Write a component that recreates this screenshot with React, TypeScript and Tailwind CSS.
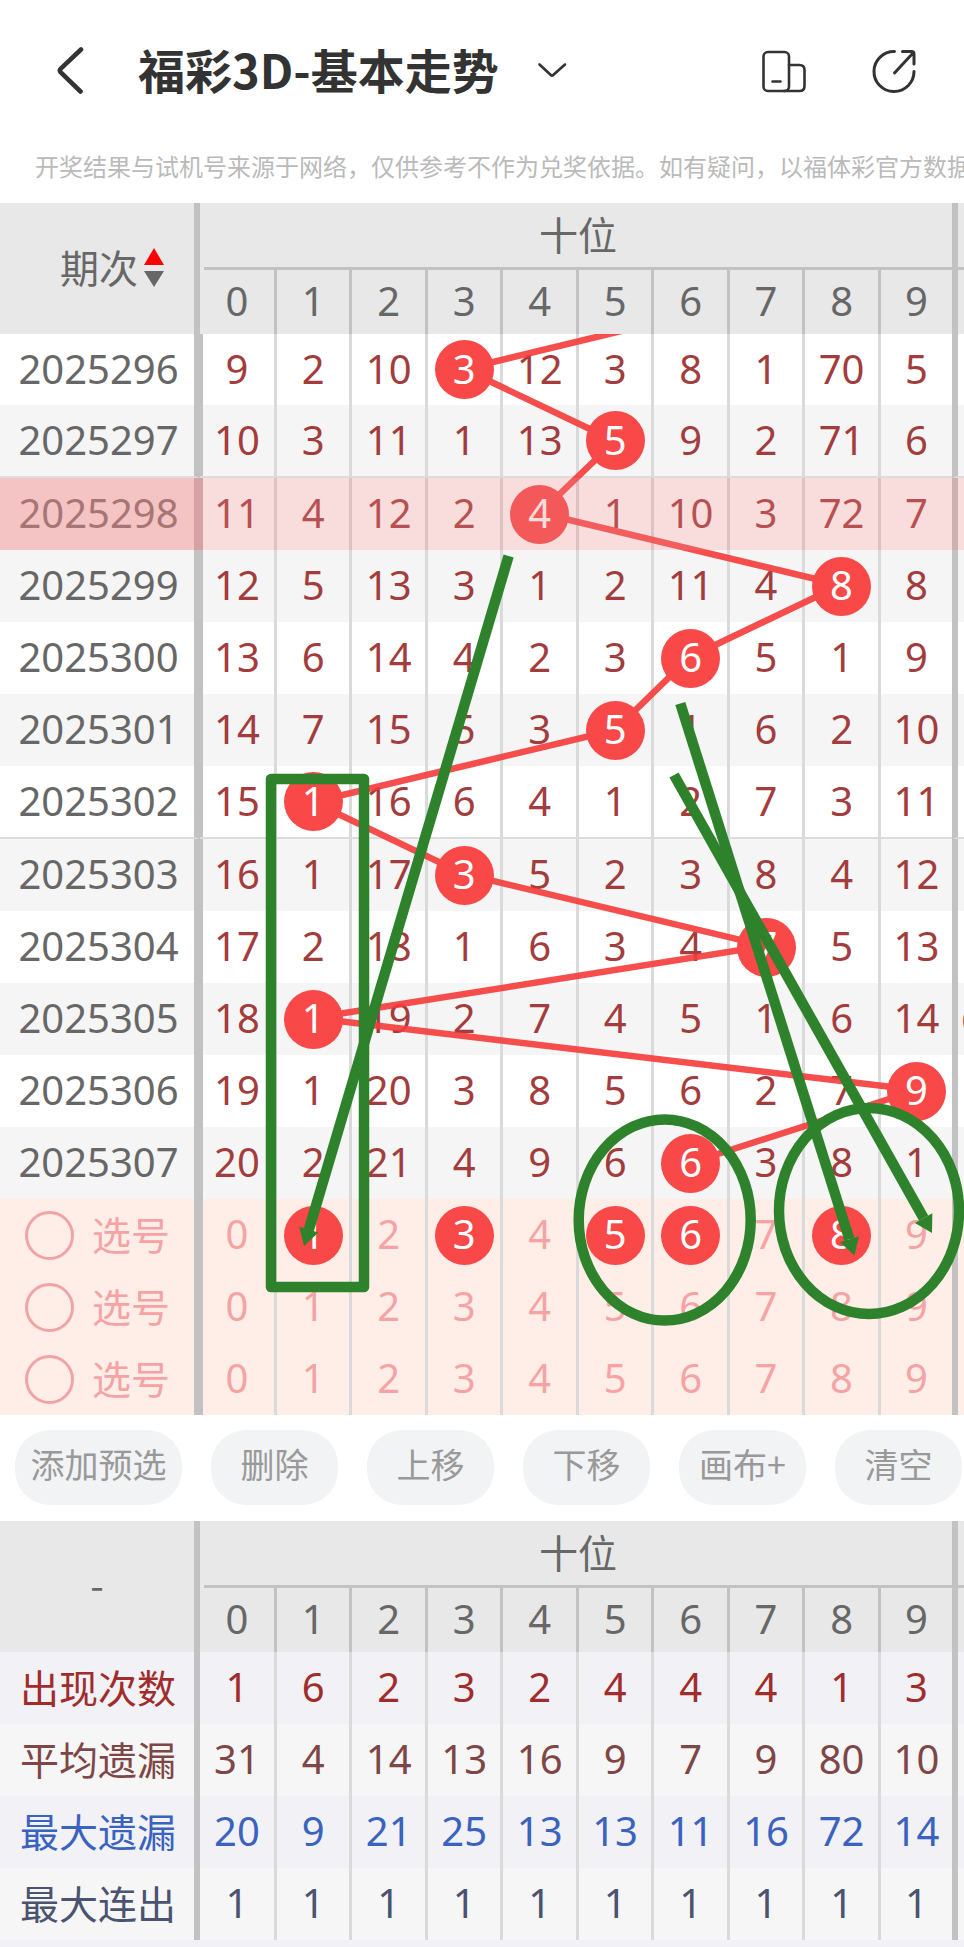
import { useState } from "react";
import type { ReactNode } from "react";

type DrawRow = { issue: string; values: number[]; hit: number; next?: string };

const DIGITS = [0, 1, 2, 3, 4, 5, 6, 7, 8, 9];

const DRAWS: DrawRow[] = [
  { issue: "2025296", values: [9, 2, 10, 3, 12, 3, 8, 1, 70, 5], hit: 3 },
  { issue: "2025297", values: [10, 3, 11, 1, 13, 5, 9, 2, 71, 6], hit: 5 },
  { issue: "2025298", values: [11, 4, 12, 2, 4, 1, 10, 3, 72, 7], hit: 4 },
  { issue: "2025299", values: [12, 5, 13, 3, 1, 2, 11, 4, 8, 8], hit: 8 },
  { issue: "2025300", values: [13, 6, 14, 4, 2, 3, 6, 5, 1, 9], hit: 6 },
  { issue: "2025301", values: [14, 7, 15, 5, 3, 5, 1, 6, 2, 10], hit: 5 },
  { issue: "2025302", values: [15, 1, 16, 6, 4, 1, 2, 7, 3, 11], hit: 1 },
  { issue: "2025303", values: [16, 1, 17, 3, 5, 2, 3, 8, 4, 12], hit: 3 },
  { issue: "2025304", values: [17, 2, 18, 1, 6, 3, 4, 7, 5, 13], hit: 7 },
  { issue: "2025305", values: [18, 1, 19, 2, 7, 4, 5, 1, 6, 14], hit: 1, next: "6" },
  { issue: "2025306", values: [19, 1, 20, 3, 8, 5, 6, 2, 7, 9], hit: 9 },
  { issue: "2025307", values: [20, 2, 21, 4, 9, 6, 6, 3, 8, 1], hit: 6 },
];

const STATS = [
  { label: "出现次数", values: [1, 6, 2, 3, 2, 4, 4, 4, 1, 3], tone: "bg-[#f1f1f6] text-[#a02c2c]" },
  { label: "平均遗漏", values: [31, 4, 14, 13, 16, 9, 7, 9, 80, 10], tone: "bg-[#f6f6f6] text-[#7e4646]" },
  { label: "最大遗漏", values: [20, 9, 21, 25, 13, 13, 11, 16, 72, 14], tone: "bg-[#f1f1f6] text-[#3a62bf]" },
  { label: "最大连出", values: [1, 1, 1, 1, 1, 1, 1, 1, 1, 1], tone: "bg-[#f6f6f6] text-[#4a5370]" },
];

const ACTIONS = ["删除", "上移", "下移", "画布+", "清空"];

const NUM = "font-['Noto_Sans','Noto_Sans_CJK_SC',sans-serif] text-[40px] leading-none";
const BALL = "relative z-20 mx-auto flex size-[59px] items-center justify-center rounded-full bg-[#f94848] pb-[2px] text-white";

function Columns() {
  return (
    <colgroup>
      <col className="w-[200px]" />
      <col className="w-[74px]" />
      {DIGITS.slice(1, 9).map((d) => (
        <col key={d} />
      ))}
      <col className="w-[74px]" />
      <col className="w-[12px]" />
    </colgroup>
  );
}

function TableHead({ corner }: { corner: ReactNode }) {
  return (
    <thead className="bg-[#e8e8e8] text-[#676767]">
      <tr>
        <th rowSpan={2} className="border-r-6 border-[#c2c2c2] p-0 pb-1 font-normal">
          {corner}
        </th>
        <th colSpan={10} className="p-0 pl-1 font-normal">
          <div className="flex h-[67px] items-center justify-center border-b-3 border-[#c2c2c2] pb-1 text-[39px] leading-none">
            十位
          </div>
        </th>
        <th className="border-l-6 border-[#c2c2c2] p-0">
          <div className="h-[67px] border-b-3 border-[#c2c2c2]" />
        </th>
      </tr>
      <tr>
        {DIGITS.map((d) => (
          <th key={d} className={`h-16 border-[#c2c2c2] p-0 pb-[2px] text-center font-normal ${NUM} ${d > 0 ? "border-l-3" : ""}`}>
            {d}
          </th>
        ))}
        <th className="border-l-6 border-[#c2c2c2] p-0" />
      </tr>
    </thead>
  );
}

function TrendRow({ row, index }: { row: DrawRow; index: number }) {
  const height = index === 0 ? "h-[71px]" : index === 1 || index === 6 ? "h-[73px]" : "h-[72px]";
  const rule = index === 1 || index === 6 ? "border-b-2 border-b-[#dcdcdc]" : "";
  return (
    <tr className={`relative text-[#a33c3c] ${index % 2 ? "bg-[#f5f5f5]" : "bg-white"}`}>
      <th className={`${height} ${rule} ${NUM} border-r-6 border-r-[#c2c2c2] p-0 pb-[2px] pl-[3px] text-center font-normal text-[#676767]`}>
        {row.issue}
        {row.issue === "2025298" && (
          <>
            <span className="absolute inset-0 z-30 bg-[#ea8585]/[.285]" />
            <span className="absolute inset-y-0 left-0 z-30 w-[203px] bg-[#ea8585]/[.285]" />
          </>
        )}
      </th>
      {row.values.map((v, d) => (
        <td
          key={d}
          className={`${rule} ${NUM} border-l-[#dadada] p-0 text-center ${d === row.hit ? "" : "pb-[2px]"} ${
            d > 0 ? "border-l-3" : "shadow-[inset_3px_0_0_#c2c2c2]"
          }`}
        >
          {d === row.hit ? <span className={BALL}>{v}</span> : v}
        </td>
      ))}
      <td className={`${rule} ${NUM} border-l-6 border-l-[#c2c2c2] p-0`}>
        <div className="overflow-hidden pl-[3px]">{row.next}</div>
      </td>
    </tr>
  );
}

function PickRow({ index }: { index: number }) {
  const [picked, setPicked] = useState<number[]>(index === 0 ? [1, 3, 5, 6, 8] : []);
  const toggle = (d: number) => setPicked((p) => (p.includes(d) ? p.filter((x) => x !== d) : [...p, d]));
  return (
    <tr className="bg-[#ffeee8] text-[#f5a3a5]">
      <th className="h-[72px] border-r-6 border-[#c2c2c2] p-0 pl-[25px] font-normal">
        <label className="flex items-center gap-[18px] text-[39px] leading-none">
          <input type="radio" name="pick" className="size-[49px] shrink-0 appearance-none rounded-full border-3 border-[#f2a3a5]" />
          <span className="pb-1">选号</span>
        </label>
      </th>
      {DIGITS.map((d) => (
        <td key={d} className={`border-[#dadada] p-0 text-center ${d > 0 ? "border-l-3" : "shadow-[inset_3px_0_0_#c2c2c2]"}`}>
          <button
            type="button"
            onClick={() => toggle(d)}
            className={`${NUM} ${picked.includes(d) ? BALL : "mx-auto flex size-[59px] items-center justify-center pb-[2px]"}`}
          >
            {d}
          </button>
        </td>
      ))}
      <td className="border-l-6 border-[#c2c2c2] p-0" />
    </tr>
  );
}

function TrendLines() {
  return (
    <svg
      viewBox="0 203 964 1212"
      preserveAspectRatio="none"
      className="pointer-events-none absolute inset-0 z-10 size-full"
      aria-hidden="true"
    >
      <clipPath id="body-area">
        <rect x="0" y="334" width="964" height="1081" />
      </clipPath>
      <polyline
        clipPath="url(#body-area)"
        points="766,296 464,369 615,441 540,513 841,585 690,657 615,730 313,802 464,874 766,946 313,1018 917,1090 690,1163"
        fill="none"
        stroke="#f53a3a"
        strokeOpacity="0.9"
        strokeWidth="6.5"
      />
    </svg>
  );
}

function Arrow({ from, to }: { from: [number, number]; to: [number, number] }) {
  const dx = to[0] - from[0];
  const dy = to[1] - from[1];
  const len = Math.hypot(dx, dy);
  const ux = dx / len;
  const uy = dy / len;
  const bx = to[0] - ux * 17;
  const by = to[1] - uy * 17;
  const head = `${to[0]},${to[1]} ${bx - uy * 10},${by + ux * 10} ${bx + uy * 10},${by - ux * 10}`;
  return (
    <g>
      <line x1={from[0]} y1={from[1]} x2={bx} y2={by} stroke="#2f822c" strokeWidth="10.5" />
      <polygon points={head} fill="#2f822c" />
    </g>
  );
}

function Annotations() {
  return (
    <svg
      viewBox="0 203 964 1212"
      preserveAspectRatio="none"
      className="pointer-events-none absolute inset-0 z-40 size-full"
      aria-hidden="true"
    >
      <g fill="none" stroke="#2f822c" strokeWidth="10.5" strokeLinejoin="round">
        <rect x="271" y="779" width="93" height="508" />
        <ellipse cx="664.7" cy="1220" rx="86" ry="100.5" />
        <ellipse cx="869" cy="1211" rx="90" ry="103" />
      </g>
      <Arrow from={[508.6, 556]} to={[304, 1246]} />
      <Arrow from={[680.3, 703.5]} to={[854.5, 1255.5]} />
      <Arrow from={[674, 775]} to={[932, 1233]} />
    </svg>
  );
}

export default function App() {
  return (
    <div className="min-h-screen overflow-x-hidden bg-[#f1f1f6] font-['Noto_Sans_CJK_SC',sans-serif]">
      <header className="flex h-[140px] items-center bg-white pr-[47px] pl-14 text-[#333]">
        <button type="button" aria-label="返回" className="shrink-0">
          <svg width="30" height="50" viewBox="56 44 30 50" fill="none" stroke="currentColor" strokeWidth="4.6" strokeLinecap="round" strokeLinejoin="round">
            <path d="M81 48.5L60.8 67.6Q59 69.5 60.8 71.4L80.5 90.5" />
          </svg>
        </button>
        <h1 className="ml-[52px] pb-1 text-[47px] leading-none font-bold whitespace-nowrap">福彩3D-基本走势</h1>
        <button type="button" aria-label="切换走势" className="ml-[37px] shrink-0">
          <svg width="32" height="18" viewBox="536 61 32 18" fill="none" stroke="currentColor" strokeWidth="2.6" strokeLinecap="round" strokeLinejoin="round">
            <path d="M539.5 64.5L550.8 75Q552 76.2 553.2 75L565 64.5" />
          </svg>
        </button>
        <div className="ml-auto flex shrink-0 gap-16 pt-[2px]">
          <button type="button" aria-label="横屏">
            <svg width="46" height="46" viewBox="761 48 46 46" fill="none" stroke="currentColor" strokeWidth="2.6" strokeLinecap="round" strokeLinejoin="round">
              <rect x="763.5" y="52" width="25.5" height="39" rx="4.5" />
              <path d="M789 65H799.5Q804.5 65 804.5 70V86Q804.5 91 799.5 91H784M772.5 81.5H780.5" />
            </svg>
          </button>
          <button type="button" aria-label="分享">
            <svg width="46" height="46" viewBox="871 48 46 46" fill="none" stroke="currentColor" strokeWidth="3" strokeLinecap="round" strokeLinejoin="round">
              <path d="M894.5 51.5A20 20 0 1 0 914 71.5M894.5 73L913.5 52.5M902.5 51.5H911.5Q914 51.5 914 54V64" />
            </svg>
          </button>
        </div>
      </header>
      <p className="h-[63px] overflow-hidden bg-white pt-2 pl-[35px] text-2xl leading-9 whitespace-nowrap text-[#bababa]">
        开奖结果与试机号来源于网络，仅供参考不作为兑奖依据。如有疑问，以福体彩官方数据为准
      </p>

      <section className="relative overflow-hidden">
        <table className="w-full table-fixed border-separate border-spacing-0">
          <Columns />
          <TableHead
            corner={
              <button type="button" className="flex w-full items-center justify-end gap-[6px] pr-[30px] text-[39px] leading-none">
                期次
                <svg width="20" height="40" viewBox="0 0 20 40" aria-hidden="true">
                  <path d="M10 1L20 18H0Z" fill="#fe0000" />
                  <path d="M0 24H20L10 40Z" fill="#676767" />
                </svg>
              </button>
            }
          />
          <tbody>
            {DRAWS.map((row, i) => (
              <TrendRow key={row.issue} row={row} index={i} />
            ))}
            {[0, 1, 2].map((i) => (
              <PickRow key={i} index={i} />
            ))}
          </tbody>
        </table>
        <TrendLines />
        <Annotations />
      </section>

      <div className="flex gap-[29px] overflow-hidden bg-white pt-[15px] pb-4 pl-[15px] text-[34px] leading-none text-[#999]">
        <button type="button" className="h-[75px] w-[167px] shrink-0 rounded-[35px] bg-[#f1f3f5] pb-2">
          添加预选
        </button>
        {ACTIONS.map((a) => (
          <button key={a} type="button" className="h-[75px] w-[127px] shrink-0 rounded-[35px] bg-[#f1f3f5] pb-2">
            {a}
          </button>
        ))}
      </div>

      <table className="w-full table-fixed border-separate border-spacing-0">
        <Columns />
        <TableHead corner={<span className="text-[39px] leading-none">-</span>} />
        <tbody>
          {STATS.map((s) => (
            <tr key={s.label} className={s.tone}>
              <th className="h-[72px] border-r-6 border-[#c2c2c2] p-0 pb-1 pl-[2px] text-center text-[39px] leading-none font-normal">
                {s.label}
              </th>
              {s.values.map((v, d) => (
                <td key={d} className={`${NUM} border-[#dadada] p-0 pb-[2px] text-center ${d > 0 ? "border-l-3" : ""}`}>
                  {v}
                </td>
              ))}
              <td className="border-l-6 border-[#c2c2c2] p-0" />
            </tr>
          ))}
        </tbody>
      </table>
    </div>
  );
}
